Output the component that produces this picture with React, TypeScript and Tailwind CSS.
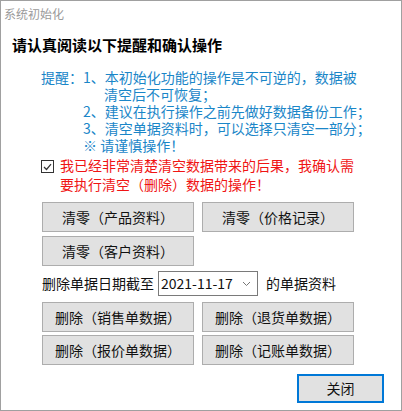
const font = { fontFamily: '"Noto Sans CJK SC", "Noto Sans", sans-serif' }

const Btn = ({ label }: { label: string }) => (
  <button className="h-[30px] w-[152px] bg-[#e1e1e1] border border-[#adadad] text-[14px] text-[#111] text-center leading-none">
    {label}
  </button>
)

const App = () => {
  return (
    <div
      style={font}
      className="w-[402px] h-[411px] bg-white border border-[#a0a0a0] flex flex-col overflow-hidden"
    >
      <div className="h-[28px] pt-[5px] pl-[3px] text-[12px] leading-[16px] text-[#9a9a9a]">
        系统初始化
      </div>

      <div className="mt-[6px] pl-[11px] text-[15px] leading-[20px] font-bold text-black">
        请认真阅读以下提醒和确认操作
      </div>

      <div className="mt-[14px] pl-[40px] flex text-[14px] leading-[17px] text-[#1a86c8]">
        <span>提醒：</span>
        <div className="flex flex-col">
          <span>1、本初始化功能的操作是不可逆的，数据被</span>
          <span className="pl-[21px]">清空后不可恢复；</span>
          <span>2、建议在执行操作之前先做好数据备份工作；</span>
          <span>3、清空单据资料时，可以选择只清空一部分；</span>
          <span>※&nbsp;请谨慎操作！</span>
        </div>
      </div>

      <div className="mt-[2px] pl-[40px] flex gap-[6px]">
        <div className="mt-[4px] w-[13px] h-[13px] border border-[#333] bg-white flex items-center justify-center shrink-0">
          <svg width="9" height="8" viewBox="0 0 9 8">
            <path d="M1 4 L3.5 6.5 L8 1.2" fill="none" stroke="#333" strokeWidth="1.2" />
          </svg>
        </div>
        <div className="text-[14px] leading-[19px] text-[#f01414]">
          我已经非常清楚清空数据带来的后果，我确认需
          <br />
          要执行清空（删除）数据的操作！
        </div>
      </div>

      <div className="mt-[8px] pl-[41px] grid grid-cols-[152px_152px] gap-x-[8px] gap-y-[4px]">
        <Btn label="清零（产品资料）" />
        <Btn label="清零（价格记录）" />
        <Btn label="清零（客户资料）" />
      </div>

      <div className="mt-[5px] pl-[41px] flex items-center h-[25px] text-[14px] text-[#111]">
        <span>删除单据日期截至</span>
        <div className="ml-[4px] w-[100px] h-[25px] border border-[#7a7a7a] bg-white flex items-center justify-between pl-[2px] pr-[6px]">
          <span className="text-[14px]">2021-11-17</span>
          <svg width="9" height="6" viewBox="0 0 9 6">
            <path d="M1 1 L4.5 4.5 L8 1" fill="none" stroke="#777" strokeWidth="1" />
          </svg>
        </div>
        <span className="ml-[8px]">的单据资料</span>
      </div>

      <div className="mt-[6px] pl-[41px] grid grid-cols-[152px_152px] gap-x-[8px] gap-y-[3px]">
        <Btn label="删除（销售单数据）" />
        <Btn label="删除（退货单数据）" />
        <Btn label="删除（报价单数据）" />
        <Btn label="删除（记账单数据）" />
      </div>

      <div className="mt-[9px] flex justify-end pr-[17px]">
        <button className="w-[87px] h-[29px] bg-[#e1e1e1] border-2 border-[#0078d7] text-[14px] text-[#111]">
          关闭
        </button>
      </div>
    </div>
  )
}

export default App
